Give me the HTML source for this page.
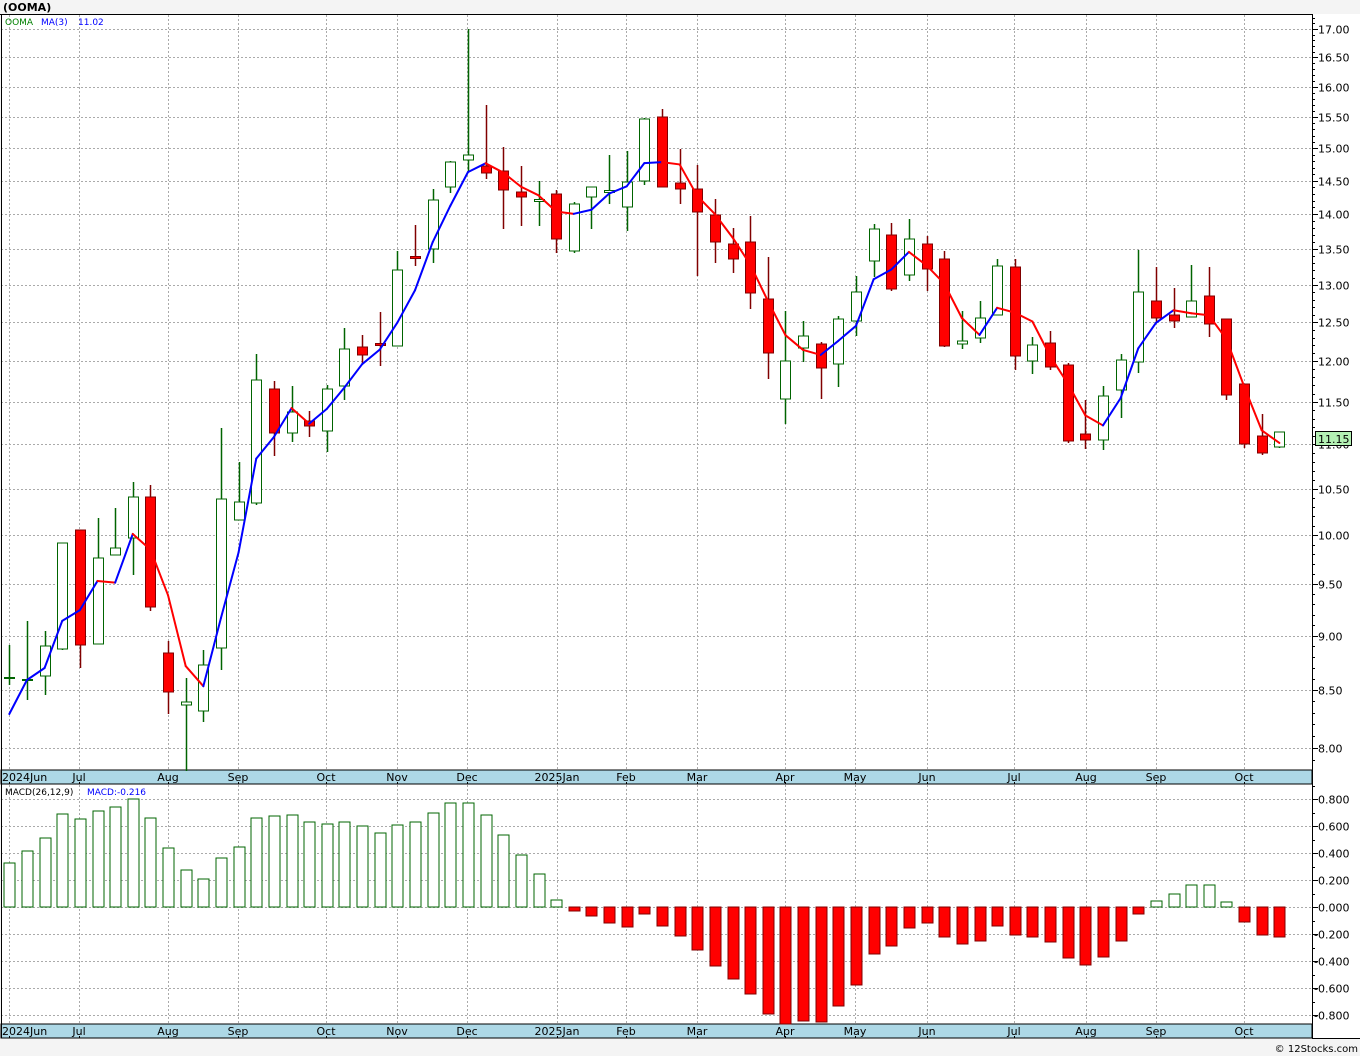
<!DOCTYPE html>
<html><head><meta charset="utf-8">
<style>
html,body{margin:0;padding:0;background:#f4f4f4;}
body{width:1360px;height:1056px;overflow:hidden;position:relative;font-family:"DejaVu Sans","Liberation Sans",sans-serif;}
svg{position:absolute;left:0;top:0;}
</style></head>
<body>
<svg id="s" width="1360" height="1056" xmlns="http://www.w3.org/2000/svg" font-family="DejaVu Sans, Liberation Sans, sans-serif"></svg>
<script>
var S=document.getElementById('s');var out=[];
function y(p){return 2731.3-953.8*Math.log(p);}
function pr(yy){return Math.exp((2731.3-yy)/953.8);}
out.push('<rect x="0" y="0" width="1360" height="1056" fill="#f4f4f4"/>');
out.push('<rect x="1" y="14" width="1311" height="756" fill="#fff"/>');
out.push('<rect x="1312" y="14" width="48" height="1024" fill="#fff"/>');
out.push('<rect x="1" y="784" width="1311" height="240" fill="#fff"/>');
out.push('<text x="3" y="11" font-size="11" font-weight="bold" fill="#000">(OOMA)</text>');
var months=[[9,'2024Jun'],[79,'Jul'],[168,'Aug'],[238,'Sep'],[326,'Oct'],[397,'Nov'],[467,'Dec'],[557,'2025Jan'],[626,'Feb'],[697,'Mar'],[785,'Apr'],[855,'May'],[927,'Jun'],[1014,'Jul'],[1086,'Aug'],[1156,'Sep'],[1244,'Oct']];
var g='stroke="#aaa" stroke-width="1" stroke-dasharray="2,2"';
for(var p=8;p<=17.001;p+=0.5){var yy=Math.round(y(p))+0.5;out.push('<line x1="1" x2="1312" y1="'+yy+'" y2="'+yy+'" '+g+'/>');out.push('<line x1="1312" x2="1318" y1="'+yy+'" y2="'+yy+'" stroke="#000"/>');out.push('<text x="1318" y="'+(yy+4)+'" font-size="11" fill="#000">'+p.toFixed(2)+'</text>');}
for(var p=7.8;p<=17.2;p+=0.1){var yy=Math.round(y(p))+0.5;if(yy>16&&yy<770)out.push('<line x1="1312" x2="1315" y1="'+yy+'" y2="'+yy+'" stroke="#000"/>');}
for(var v=-0.8;v<=0.801;v+=0.2){var yy=Math.round(907-135*v)+0.5;out.push('<line x1="1" x2="1312" y1="'+yy+'" y2="'+yy+'" '+g+'/>');out.push('<line x1="1312" x2="1318" y1="'+yy+'" y2="'+yy+'" stroke="#000"/>');var t=(Math.abs(v)<1e-6?0:v).toFixed(3);out.push('<text x="'+(t[0]=='-'?1314:1318)+'" y="'+(yy+4)+'" font-size="11" fill="#000">'+t+'</text>');}
for(var v=-0.9;v<=0.9;v+=0.1){var yy=Math.round(907-135*v)+0.5;if(yy>786&&yy<1024)out.push('<line x1="1312" x2="1315" y1="'+yy+'" y2="'+yy+'" stroke="#000"/>');}
months.forEach(function(m){var x=m[0]+0.5;out.push('<line x1="'+x+'" x2="'+x+'" y1="15" y2="770" '+g+'/>');out.push('<line x1="'+x+'" x2="'+x+'" y1="785" y2="1024" '+g+'/>');});
[770,1024].forEach(function(t){out.push('<rect x="1" y="'+t+'" width="1311" height="14" fill="#add8e6" stroke="#000" stroke-width="1"/>');
months.forEach(function(m,i){var a=i==0?'start':'middle';var x=i==0?2:m[0];out.push('<text x="'+x+'" y="'+(t+11)+'" font-size="11" text-anchor="'+a+'" fill="#000">'+m[1]+'</text>');out.push('<line x1="'+(m[0]+0.5)+'" x2="'+(m[0]+0.5)+'" y1="'+(t+12)+'" y2="'+(t+14)+'" stroke="#000"/>');});});
out.push('<line x1="0" x2="1312" y1="14.5" y2="14.5" stroke="#000"/>');
out.push('<line x1="1.5" x2="1.5" y1="14" y2="1038" stroke="#000"/>');
out.push('<line x1="1312.5" x2="1312.5" y1="14" y2="1038" stroke="#000"/>');
out.push('<line x1="1312" x2="1360" y1="1038.5" y2="1038.5" stroke="#000"/>');
var D=[['g',645,685,677,678],['g',621,700,679,680],['g',631,695,646,676],['g',543,650,543,649],['r',530,668,530,645],['g',518,644,558,644],['g',508,555,548,555],['g',482,575,497,538],['r',485,611,497,607],['r',641,714,653,692],['g',678,771,702,705],['g',650,722,665,711],['g',428,670,499,648],['g',462,520,502,520],['g',354,505,380,503],['r',381,456,389,433],['g',386,442,412,433],['r',411,437,421,426],['g',385,452,389,431],['g',328,400,349,386],['r',335,363,347,355],['r',312,366,343,345],['g',251,346,270,346],['r',225,266,256,258],['g',189,263,200,249],['g',161,193,162,187],['g',29,171,155,160],['r',105,179,166,173],['r',147,229,171,190],['r',166,226,192,197],['g',181,226,199,201],['r',190,253,194,239],['g',202,253,204,251],['g',187,229,187,197],['g',155,204,190,192],['g',151,231,182,207],['g',118,185,119,181],['r',109,187,117,187],['r',149,204,183,189],['r',165,276,189,212],['r',199,263,215,242],['r',228,273,244,259],['r',216,309,242,293],['r',257,379,299,353],['g',311,424,361,399],['g',321,362,336,348],['r',342,399,344,368],['g',316,387,319,364],['g',276,336,292,321],['g',224,277,229,261],['r',223,291,235,289],['g',219,281,239,275],['r',236,291,244,269],['r',251,347,259,346],['g',311,349,341,344],['g',301,343,318,338],['g',259,315,266,315],['r',259,370,267,356],['g',337,374,345,361],['r',331,370,343,367],['r',363,443,365,441],['r',400,449,434,440],['g',386,450,396,440],['g',354,418,360,390],['g',250,373,292,362],['r',267,322,301,318],['r',288,328,315,321],['g',265,317,301,317],['r',267,337,296,324],['r',319,400,319,395],['r',384,448,384,444],['r',414,455,436,453],['g',432,448,432,447]];
var M=[863,851,838,814,819,811,807,799,818,848,870,879,858,847,818,816,815,822,824,822,826,833,825,822,813,803,803,815,835,855,874,900,911,916,923,927,914,926,936,950,966,979,994,1014,1024,1021,1022,1006,985,954,946,928,923,937,944,941,926,935,937,942,958,965,957,941,914,901,894,885,885,902,922,935,937];
function X(i){return 9.3+17.64*i;}
D.forEach(function(d,i){var x=Math.round(X(i))+0.5;var wc=d[0]=='g'?'#006400':'#800000';
out.push('<line x1="'+x+'" x2="'+x+'" y1="'+d[1]+'" y2="'+d[2]+'" stroke="'+wc+'" stroke-width="1.5"/>');
var h=d[4]-d[3];
if(h<3){out.push('<rect x="'+(x-5)+'" y="'+(d[3]+0.5)+'" width="10" height="'+Math.max(h,1)+'" fill="'+(d[0]=='g'?'#fff':'#f00')+'" stroke="'+wc+'" stroke-width="1"/>');}
else out.push('<rect x="'+(x-5)+'" y="'+d[3]+'" width="10" height="'+h+'" fill="'+(d[0]=='g'?'#fff':'#f00')+'" stroke="'+wc+'" stroke-width="1"/>');
var m=M[i];var bh=Math.abs(m-907);if(bh<2)bh=2;
out.push('<rect x="'+(x-5.5)+'" y="'+(m<907?m:907)+'" width="11" height="'+bh+'" fill="'+(m<907?'#fff':'#f00')+'" stroke="'+(m<907?'#006400':'#800000')+'" stroke-width="1"/>');
});
var cl=D.map(function(d){return d[0]=='g'?d[3]:d[4];});
var ma=[714,680,668];
for(var i=3;i<D.length;i++){var a=(pr(cl[i])+pr(cl[i-1])+pr(cl[i-2]))/3;ma.push(y(a));}
for(var i=1;i<ma.length;i++){var c=ma[i]>ma[i-1]?'#f00':'#00f';out.push('<line x1="'+X(i-1)+'" y1="'+ma[i-1]+'" x2="'+X(i)+'" y2="'+ma[i]+'" stroke="'+c+'" stroke-width="2" stroke-linecap="round"/>');}
out.push('<text x="5" y="25" font-size="9" fill="#008000">OOMA</text><text x="41" y="25" font-size="9" fill="#0000ff">MA(3)</text><text x="78" y="25" font-size="9" fill="#0000ff">11.02</text>');
out.push('<text x="5" y="795" font-size="9" fill="#000">MACD(26,12,9)</text><text x="87" y="795" font-size="9" fill="#0000ff">MACD:-0.216</text>');
out.push('<rect x="1315.5" y="431.5" width="36" height="14" fill="#b4f0b4" stroke="#000"/><text x="1318" y="443" font-size="11" fill="#000">11.15</text>');
out.push('<text x="1358" y="1052" font-size="10" text-anchor="end" fill="#000">© 12Stocks.com</text>');
S.innerHTML=out.join('');
</script>
</body></html>
